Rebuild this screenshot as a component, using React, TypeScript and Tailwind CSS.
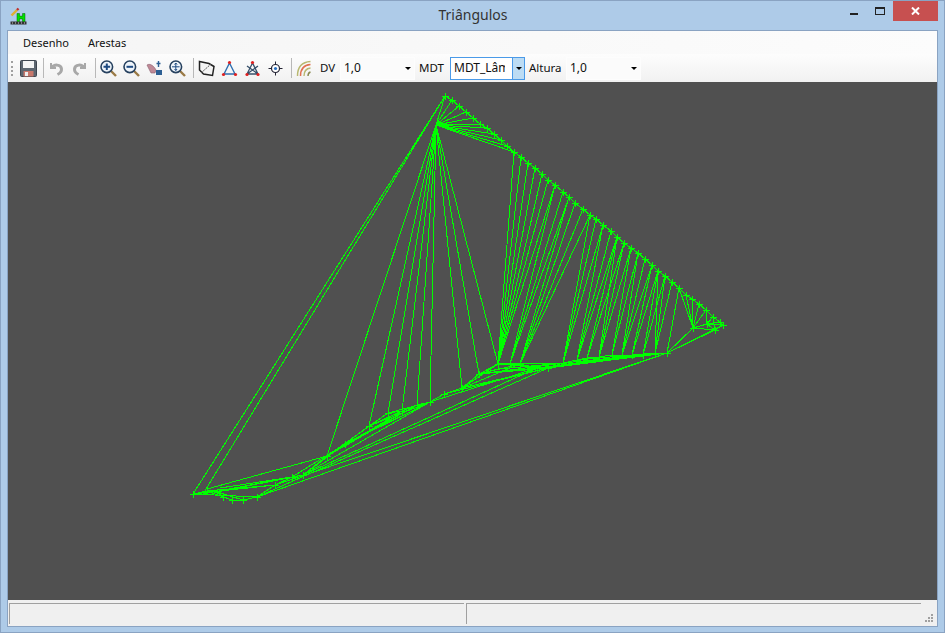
import React from 'react';

const TOP: [number, number][] = [
  [445, 96], [452, 100], [459, 106], [466, 112], [473, 118], [480, 124], [487, 128], [494, 134], [501, 140], [507, 146],
  [514, 152], [521, 157], [528, 163], [535, 168], [542, 174], [548, 180], [555, 185], [563, 192], [569, 197], [575, 203],
  [583, 209], [590, 215], [596, 219], [603, 225], [611, 231], [617, 237], [624, 243], [631, 248], [638, 253], [645, 259],
  [652, 265], [658, 271], [665, 276], [672, 282], [679, 288], [686, 295], [692, 299], [699, 304], [706, 310], [713, 317],
  [720, 322], [723, 325],
];

const BOTTOM: [number, number][] = [
  [193, 494], [207, 491], [217, 492], [223, 497], [232, 500], [243, 500], [257, 497], [275, 485], [292, 477], [303, 475],
  [327, 456], [345, 444], [369, 426], [388, 413], [402, 411], [417, 405], [430, 402], [444, 394], [462, 388], [479, 374],
  [498, 364], [510, 364], [520, 364], [537, 368], [548, 368], [563, 363], [577, 360], [587, 358], [599, 357], [612, 355],
  [622, 355], [632, 355], [643, 355], [655, 353], [667, 353], [693, 328], [707, 324], [715, 330],
];

const HUB: [number, number] = [436, 125];

const EDGES: number[][] = [
  // hub to the top edge
  ...[445, 452, 459, 466, 473, 480, 487, 494, 501, 507, 514].map(x => {
    const p = TOP.find(t => t[0] === x)!;
    return [HUB[0], HUB[1], p[0], p[1]];
  }),
  // hub down to the bottom chain
  ...[327, 369, 388, 402, 417, 430, 462, 479, 498].map(x => {
    const p = BOTTOM.find(b => b[0] === x)!;
    return [HUB[0], HUB[1], p[0], p[1]];
  }),
  // long sides
  [193, 494, 445, 96], [203, 494, 445, 96],
  [257, 497, 667, 353], [275, 485, 667, 353], [257, 497, 548, 368], [303, 475, 537, 368],
  [667, 353, 723, 325], [667, 353, 715, 330], [667, 353, 693, 328],
  // lower left fan
  [207, 489, 327, 456], [207, 491, 275, 485], [220, 488, 292, 477], [217, 492, 303, 475], [193, 494, 257, 497],
  [193, 494, 275, 485], [207, 491, 232, 500], [217, 492, 243, 500], [203, 494, 292, 477],
  // chain fan
  [292, 477, 345, 444], [303, 475, 369, 426], [327, 456, 417, 405], [327, 456, 402, 411], [345, 444, 430, 402],
  [345, 444, 417, 405], [369, 426, 430, 402], [369, 426, 402, 411], [388, 413, 430, 402], [303, 475, 430, 402],
  [327, 456, 388, 413], [430, 402, 537, 368], [444, 394, 548, 368], [462, 388, 520, 364], [479, 374, 537, 368],
  [479, 374, 520, 364], [479, 374, 548, 368], [462, 388, 498, 364], [498, 364, 548, 368], [498, 364, 564, 363],
  [510, 364, 548, 368], [548, 368, 643, 355], [563, 363, 667, 353], [577, 360, 655, 353], [537, 368, 655, 353],
  [548, 368, 667, 353], [548, 368, 632, 355], [563, 363, 643, 355], [479, 374, 564, 363], [462, 388, 548, 368],
  [479, 374, 498, 369], [498, 369, 564, 363],
  // right cluster
  [679, 288, 693, 328], [686, 295, 693, 328], [692, 299, 693, 328], [699, 304, 693, 328], [706, 310, 693, 328],
  [706, 310, 707, 324], [713, 317, 707, 324], [713, 317, 715, 330], [720, 322, 707, 324], [693, 328, 715, 330],
  [693, 328, 707, 324], [707, 324, 723, 325], [707, 324, 715, 330], [715, 330, 723, 325],
];

// top edge points fanned down to each base point
const FANS: [number, number, number[]][] = [
  [498, 364, [514, 521, 528, 535, 542, 548, 555]],
  [510, 364, [555, 563, 569]],
  [520, 364, [569, 575, 583, 590]],
  [563, 363, [590, 596, 603]],
  [577, 360, [603, 611, 617]],
  [587, 358, [617, 624]],
  [599, 357, [617, 624, 631]],
  [612, 355, [631, 638]],
  [622, 355, [638, 645, 652]],
  [632, 355, [652, 658]],
  [643, 355, [658, 665]],
  [655, 353, [658, 665, 672]],
  [667, 353, [679]],
];

const FAN_EDGES = FANS.flatMap(([bx, by, tops]) =>
  tops.map(x => {
    const p = TOP.find(t => t[0] === x)!;
    return [bx, by, p[0], p[1]];
  })
);

const Mesh = () => (
  <svg viewBox="8 82 929 518" className="block w-full h-full" shapeRendering="crispEdges">
    <polyline points={TOP.map(p => p.join(',')).join(' ')} fill="none" stroke="#00ff00" />
    <polyline points={BOTTOM.slice(0, 35).map(p => p.join(',')).join(' ')} fill="none" stroke="#00ff00" />
    {[...EDGES, ...FAN_EDGES].map((e, i) => (
      <line key={i} x1={e[0]} y1={e[1]} x2={e[2]} y2={e[3]} stroke="#00ff00" />
    ))}
    {[...TOP, ...BOTTOM].map((p, i) => (
      <path key={i} d={`M${p[0] - 3.5} ${p[1] + 0.5}h7M${p[0] + 0.5} ${p[1] - 3}v7`} stroke="#00ff00" />
    ))}
  </svg>
);

const Separator = ({ className = 'ml-[4px]' }: { className?: string }) => (
  <div className={`w-px h-[20px] bg-[#b8b8b8] mr-[1px] ${className}`} />
);

const ToolIcon = ({ children }: { children: React.ReactNode }) => (
  <div className="flex items-center justify-center h-[22px] w-[23px]">
    <svg width="17" height="17" viewBox="0 0 17 17" fill="none">{children}</svg>
  </div>
);

const Magnifier = ({ mark }: { mark: React.ReactNode }) => (
  <>
    <path d="M10.5 10.5l5.500 5.500" stroke="#9a7a45" strokeWidth="2.4" />
    <circle cx="6.8" cy="6.8" r="5.8" fill="#eef4fa" stroke="#26415f" strokeWidth="1.6" />
    {mark}
  </>
);

const Combo = ({ value, active }: { value: string; active?: boolean }) => (
  <div className={`flex items-center h-[23px] w-[75px] border ${active ? 'border-[#4a9ae8] bg-white' : 'border-[#fdfdfd] bg-[#fbfbfb]'}`}>
    <span className={`flex-1 min-w-0 overflow-hidden whitespace-nowrap text-[12px] text-[#111] ${active ? 'pl-[3px] mr-[7px]' : 'pl-[3px]'}`}>{value}</span>
    <div className={`flex items-center justify-center h-full w-[12px] ${active ? 'bg-[#bcdcf4] border-l border-[#4a9ae8]' : ''}`}>
      <div className="w-0 h-0 border-x-[3px] border-x-transparent border-t-[3px] border-t-black" />
    </div>
  </div>
);

export default function App() {
  return (
    <div
      className="w-[945px] h-[633px] flex flex-col bg-[#aecbe8] border border-[#8aa3c2] overflow-hidden"
      style={{ fontFamily: '"Noto Sans", sans-serif' }}
    >
      {/* Title bar */}
      <div className="flex items-start h-[30px] shrink-0 px-[5px]">
        <div className="flex-1 pt-[6px] pl-[4px]">
          <svg width="18" height="18" viewBox="0 0 18 18" fill="none">
            <path d="M1.5 8.5L7 3" stroke="#e0b030" strokeWidth="2.4" />
            <path d="M7 3l1.5-1.5" stroke="#c03030" strokeWidth="2.4" />
            <path d="M7 6.5h2.5v2.6h3V6.5h2.5v9h-2.5v-3.6h-3v3.6H7z" fill="#00e000" stroke="#0a5a0a" strokeWidth="0.5" />
            <rect x="0.5" y="14.5" width="16" height="3" fill="#333" />
            <path d="M2 16h1M5 16h1M8 16h1M11 16h1M14 16h1" stroke="#ccc" />
          </svg>
        </div>
        <div className="text-[14px] leading-[28px] text-[#333] pr-[2px]">Triângulos</div>
        <div className="flex-1 flex justify-end items-start pr-px">
          <div className="w-[26px] h-[20px] flex items-center justify-center">
            <div className="w-[8px] h-[2px] bg-[#222] mt-[6px]" />
          </div>
          <div className="w-[26px] h-[20px] flex items-center justify-center">
            <div className="w-[10px] h-[8px] border border-[#222] border-t-2" />
          </div>
          <div className="w-[45px] h-[20px] bg-[#c75050] flex items-center justify-center">
            <svg width="9" height="8" viewBox="0 0 9 8">
              <path d="M1 0.5L8 7.5M8 0.5L1 7.5" stroke="#fff" strokeWidth="2" />
            </svg>
          </div>
        </div>
      </div>

      {/* Client area */}
      <div className="flex-1 min-h-0 flex flex-col mx-[7px] mb-[6px] bg-[#f0f0f0] outline outline-[#8aa3c2]">
        {/* Menu */}
        <div className="flex items-center gap-[19px] h-[23px] shrink-0 pl-[15px] pt-[2px] text-[11px] text-[#111] bg-gradient-to-r from-[#f5f5f5] to-[#fcfcfc]">
          <span>Desenho</span>
          <span>Arestas</span>
        </div>

        {/* Toolbar */}
        <div className="flex items-center h-[28px] shrink-0 pl-[3px] bg-gradient-to-b from-[#fdfdfd] to-[#f1f1f1]">
          <div className="w-[2px] h-[15px] mr-[4px] border-l-2 border-dotted border-[#a0a0a0]" />
          <ToolIcon>
            <rect x="0.5" y="0.5" width="16" height="16" rx="1" fill="#5d6670" stroke="#3f4650" />
            <rect x="3" y="1" width="11" height="7" fill="#f4f4f4" />
            <rect x="3.5" y="11" width="10" height="5.5" fill="#c8786c" />
            <rect x="5" y="12" width="3" height="4" fill="#eee" />
          </ToolIcon>
          <Separator className="ml-[3px]" />
          <ToolIcon>
            <path d="M3 3v5h5" stroke="#a8a8a8" strokeWidth="2" />
            <path d="M3.5 8C6 4 13 4 13.5 9c.2 2.5-2 4.500-4 5.500" stroke="#a8a8a8" strokeWidth="3" />
          </ToolIcon>
          <ToolIcon>
            <path d="M14 3v5H9" stroke="#a8a8a8" strokeWidth="2" />
            <path d="M13.500 8C11 4 4 4 3.500 9c-.2 2.500 2 4.500 4 5.500" stroke="#a8a8a8" strokeWidth="3" />
          </ToolIcon>
          <Separator />
          <ToolIcon>
            <Magnifier mark={<path d="M3.500 6.800h6.600M6.800 3.500v6.600" stroke="#1d4a82" strokeWidth="2" />} />
          </ToolIcon>
          <ToolIcon>
            <Magnifier mark={<path d="M3.500 6.800h6.600" stroke="#1d4a82" strokeWidth="2" />} />
          </ToolIcon>
          <ToolIcon>
            <path d="M1 5c3-2 7 1 9 5l-1 3-4 0z" fill="#c08a96" stroke="#8a6070" strokeWidth="0.6" />
            <path d="M10 10h6v5h-6z" fill="#2d5f93" />
            <path d="M12.500 1v6M10.500 3.500h4" stroke="#2d5f93" strokeWidth="1.400" />
          </ToolIcon>
          <ToolIcon>
            <Magnifier mark={<path d="M3 6.800h7.600M6.800 3v7.600M5.500 4.500l1.300-1.500 1.300 1.500M5.500 9l1.300 1.500L8.100 9" stroke="#1d4a82" strokeWidth="1" />} />
          </ToolIcon>
          <Separator />
          <ToolIcon>
            <path d="M1.500 1.500l9.500 2 5 3-1.500 9-9-1.500-4-4z" fill="#f4f4f4" stroke="#222" strokeWidth="1.500" />
            <path d="M3 13L13 4" stroke="#555" strokeDasharray="2 1" />
          </ToolIcon>
          <ToolIcon>
            <path d="M8.500 3L3 14h11z" stroke="#2f6fb0" strokeWidth="1.400" />
            <circle cx="8.500" cy="2.500" r="1.600" fill="#e02020" />
            <circle cx="2.500" cy="14.500" r="1.600" fill="#e02020" />
            <circle cx="14.500" cy="14.500" r="1.600" fill="#e02020" />
          </ToolIcon>
          <ToolIcon>
            <path d="M8.500 3L3 14h11zM3 6l11 8M14 6L3 14" stroke="#37506a" strokeWidth="1.300" />
            <circle cx="8.500" cy="2.500" r="1.600" fill="#e02020" />
            <circle cx="3" cy="14.500" r="1.600" fill="#e02020" />
            <circle cx="14" cy="14.500" r="1.600" fill="#e02020" />
          </ToolIcon>
          <ToolIcon>
            <circle cx="8.500" cy="8.500" r="4" fill="#fff" stroke="#223" strokeWidth="1.200" />
            <circle cx="8.500" cy="8.500" r="1.600" fill="#2a70c0" />
            <path d="M8.500 1.500v3M8.500 12.500v3M1.500 8.500h3M12.500 8.500h3" stroke="#223" />
          </ToolIcon>
          <Separator />
          <ToolIcon>
            <path d="M1.500 16C1.500 7 6 2 14.500 1.500" stroke="#b8b870" strokeWidth="1.400" />
            <path d="M4.500 16C4.500 9 8 5 14.500 4.500" stroke="#e07050" strokeWidth="1.500" />
            <path d="M8 16C8 12 10 8.500 14.500 8" stroke="#b8b870" strokeWidth="1.400" />
            <path d="M12 16c0-2 .8-3.500 2.500-4" stroke="#8a8a50" strokeWidth="1.400" />
          </ToolIcon>
          <span className="text-[11.5px] text-[#111] ml-[4px] w-[20px] shrink-0">DV</span>
          <Combo value="1,0" />
          <span className="text-[11.5px] text-[#111] ml-[4px] w-[31px] shrink-0">MDT</span>
          <Combo value="MDT_Lâmina" active />
          <span className="text-[11.5px] text-[#111] ml-[4px] w-[37px] shrink-0">Altura</span>
          <Combo value="1,0" />
        </div>

        {/* Canvas */}
        <div className="flex-1 min-h-0 bg-[#505050]">
          <Mesh />
        </div>

        {/* Status bar */}
        <div className="flex h-[26px] shrink-0 bg-[#f0f0f0] pt-[3px] pb-[2px] pl-px gap-[2px]">
          <div className="w-[455px] border-t border-l border-[#a0a0a0] border-b-white border-r-white" />
          <div className="w-[455px] border-t border-l border-[#a0a0a0] border-b-white border-r-white" />
          <div className="flex-1 flex items-end justify-end pr-[3px] pb-px">
            <svg width="10" height="10" viewBox="0 0 10 10">
              <path d="M7 1h2v2H7zM4 4h2v2H4zM7 4h2v2H7zM1 7h2v2H1zM4 7h2v2H4zM7 7h2v2H7z" fill="#a0a0a0" />
            </svg>
          </div>
        </div>
      </div>
    </div>
  );
}
